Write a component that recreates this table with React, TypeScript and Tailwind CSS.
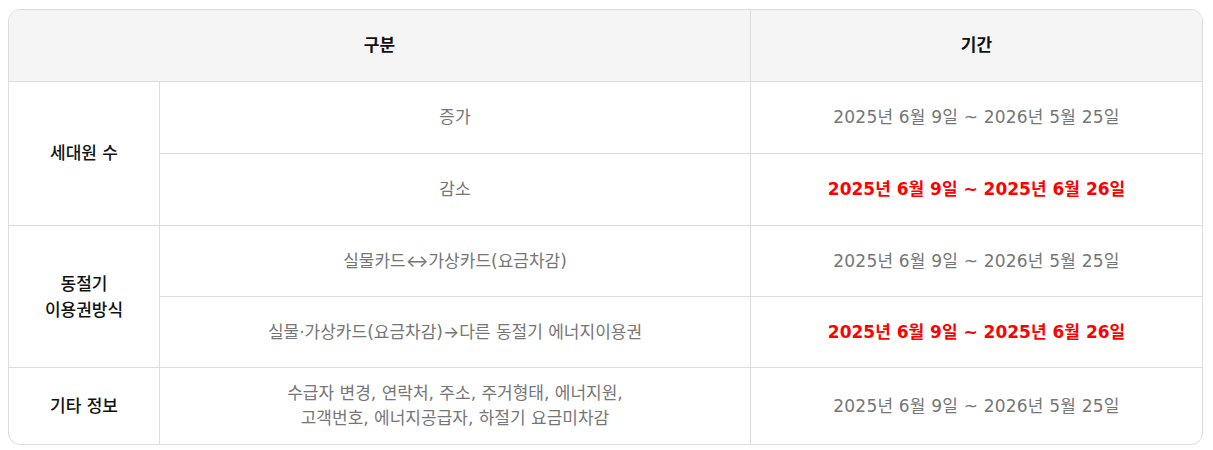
import React from 'react';

const gray = 'text-[#767676]';
const red = 'text-[#ff0000] font-bold';

// arrows come from a face with full-size arrow glyphs
const Arrow: React.FC<{ children: React.ReactNode }> = ({ children }) => (
    <span className="font-['Inter',sans-serif]">{children}</span>
);

const App: React.FC = () => {
    const cell = 'border-b border-r border-[#dddddd] text-center align-middle';
    return (
        <div className="min-h-[450px] bg-white pl-2 pt-[9px] font-['DejaVu_Sans','Noto_Sans_CJK_KR',sans-serif]">
            <div className="w-[1195px] overflow-hidden rounded-xl border border-[#dddddd]">
                <table className="w-full table-fixed border-separate border-spacing-0 text-[17px] leading-[25px]">
                    <colgroup>
                        <col className="w-[151px]" />
                        <col className="w-[591px]" />
                        <col />
                    </colgroup>
                    <thead>
                        <tr className="h-[72px] bg-[#f5f5f5]">
                            <th colSpan={2} className={`${cell} font-bold text-[#111111]`}>구분</th>
                            <th className="border-b border-[#dddddd] text-center font-bold text-[#111111]">기간</th>
                        </tr>
                    </thead>
                    <tbody>
                        {/* 세대원 수 */}
                        <tr className="h-[72px]">
                            <td rowSpan={2} className={`${cell} font-medium text-[#111111]`}>세대원 수</td>
                            <td className={`${cell} ${gray}`}>증가</td>
                            <td className={`border-b border-[#dddddd] text-center tracking-[0.2px] ${gray}`}>2025년 6월 9일 ~ 2026년 5월 25일</td>
                        </tr>
                        <tr className="h-[72px]">
                            <td className={`${cell} ${gray}`}>감소</td>
                            <td className={`border-b border-[#dddddd] text-center ${red}`}>2025년 6월 9일 ~ 2025년 6월 26일</td>
                        </tr>

                        {/* 동절기 이용권방식 */}
                        <tr className="h-[71px]">
                            <td rowSpan={2} className={`${cell} font-medium leading-[26px] text-[#111111]`}>동절기<br />이용권방식</td>
                            <td className={`${cell} ${gray}`}>실물카드<Arrow>↔</Arrow>가상카드(요금차감)</td>
                            <td className={`border-b border-[#dddddd] text-center tracking-[0.2px] ${gray}`}>2025년 6월 9일 ~ 2026년 5월 25일</td>
                        </tr>
                        <tr className="h-[71px]">
                            <td className={`${cell} ${gray}`}>실물·가상카드(요금차감)<Arrow>→</Arrow>다른 동절기 에너지이용권</td>
                            <td className={`border-b border-[#dddddd] text-center ${red}`}>2025년 6월 9일 ~ 2025년 6월 26일</td>
                        </tr>

                        {/* 기타 정보 */}
                        <tr className="h-[76px]">
                            <td className="border-r border-[#dddddd] text-center font-medium text-[#111111]">기타 정보</td>
                            <td className={`border-r border-[#dddddd] text-center ${gray}`}>
                                수급자 변경, 연락처, 주소, 주거형태, 에너지원,<br />고객번호, 에너지공급자, 하절기 요금미차감
                            </td>
                            <td className={`text-center tracking-[0.2px] ${gray}`}>2025년 6월 9일 ~ 2026년 5월 25일</td>
                        </tr>
                    </tbody>
                </table>
            </div>
        </div>
    );
};

export default App;
